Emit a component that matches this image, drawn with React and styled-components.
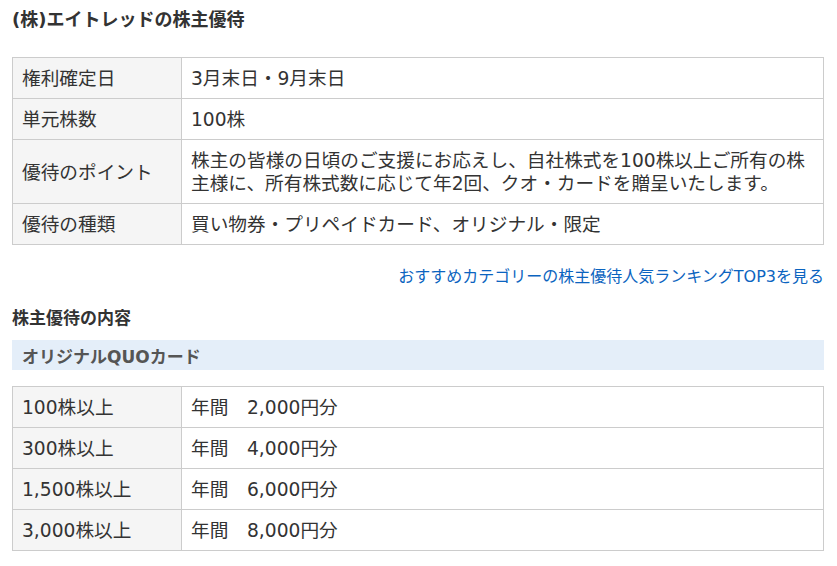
import styled, { createGlobalStyle } from "styled-components";

const GlobalStyle = createGlobalStyle`
  body {
    margin: 0;
    background: #fff;
    font-family: "DejaVu Sans", "Noto Sans CJK JP", sans-serif;
    color: #333;
  }
`

const SWrapper = styled.div`
  display: flex;
  flex-direction: column;
  width: 812px;
  margin-left: 12px;
  padding-top: 8px;
`

const STitle = styled.h2`
  margin: 0;
  font-size: 18px;
  line-height: 24px;
  font-weight: 700;
  color: #333;
`

const STable = styled.table`
  width: 100%;
  margin-top: ${({ $top }) => $top}px;
  border-collapse: collapse;
  font-size: 14pt;
  line-height: 23px;
`

const STh = styled.th`
  width: 150px;
  padding: 9px 9px 8px;
  border: 1px solid #ccc;
  background-color: #f5f5f5;
  font-weight: 400;
  text-align: left;
  color: #333;
`

const STd = styled.td`
  padding: 9px 9px 8px;
  border: 1px solid #ccc;
  color: #333;
`

const SLinkRow = styled.div`
  display: flex;
  justify-content: flex-end;
  margin-top: 20px;
`

const SLink = styled.a`
  font-size: 16px;
  line-height: 24px;
  color: #0b64c0;
  text-decoration: none;
`

const SSubTitle = styled.h3`
  margin: 17px 0 0;
  font-size: 17px;
  line-height: 24px;
  font-weight: 700;
  color: #333;
`

const SBar = styled.div`
  display: flex;
  align-items: center;
  height: 30px;
  margin-top: 10px;
  padding: 0 10px;
  background-color: #e4eef9;
  font-size: 17px;
  font-weight: 700;
  color: #555;
`

const summary = [
  ["権利確定日", "3月末日・9月末日"],
  ["単元株数", "100株"],
  [
    "優待のポイント",
    "株主の皆様の日頃のご支援にお応えし、自社株式を100株以上ご所有の株主様に、所有株式数に応じて年2回、クオ・カードを贈呈いたします。",
  ],
  ["優待の種類", "買い物券・プリペイドカード、オリジナル・限定"],
]

const tiers = [
  ["100株以上", "年間　2,000円分"],
  ["300株以上", "年間　4,000円分"],
  ["1,500株以上", "年間　6,000円分"],
  ["3,000株以上", "年間　8,000円分"],
]

const App = () => {
  return (
    <SWrapper>
      <GlobalStyle />
      <STitle>(株)エイトレッドの株主優待</STitle>
      <STable $top={25}>
        <tbody>
          {summary.map(([k, v]) => (
            <tr key={k}>
              <STh>{k}</STh>
              <STd>{v}</STd>
            </tr>
          ))}
        </tbody>
      </STable>
      <SLinkRow>
        <SLink href="#">おすすめカテゴリーの株主優待人気ランキングTOP3を見る</SLink>
      </SLinkRow>
      <SSubTitle>株主優待の内容</SSubTitle>
      <SBar>オリジナルQUOカード</SBar>
      <STable $top={16}>
        <tbody>
          {tiers.map(([k, v]) => (
            <tr key={k}>
              <STh>{k}</STh>
              <STd>{v}</STd>
            </tr>
          ))}
        </tbody>
      </STable>
    </SWrapper>
  )
}

export default App;
